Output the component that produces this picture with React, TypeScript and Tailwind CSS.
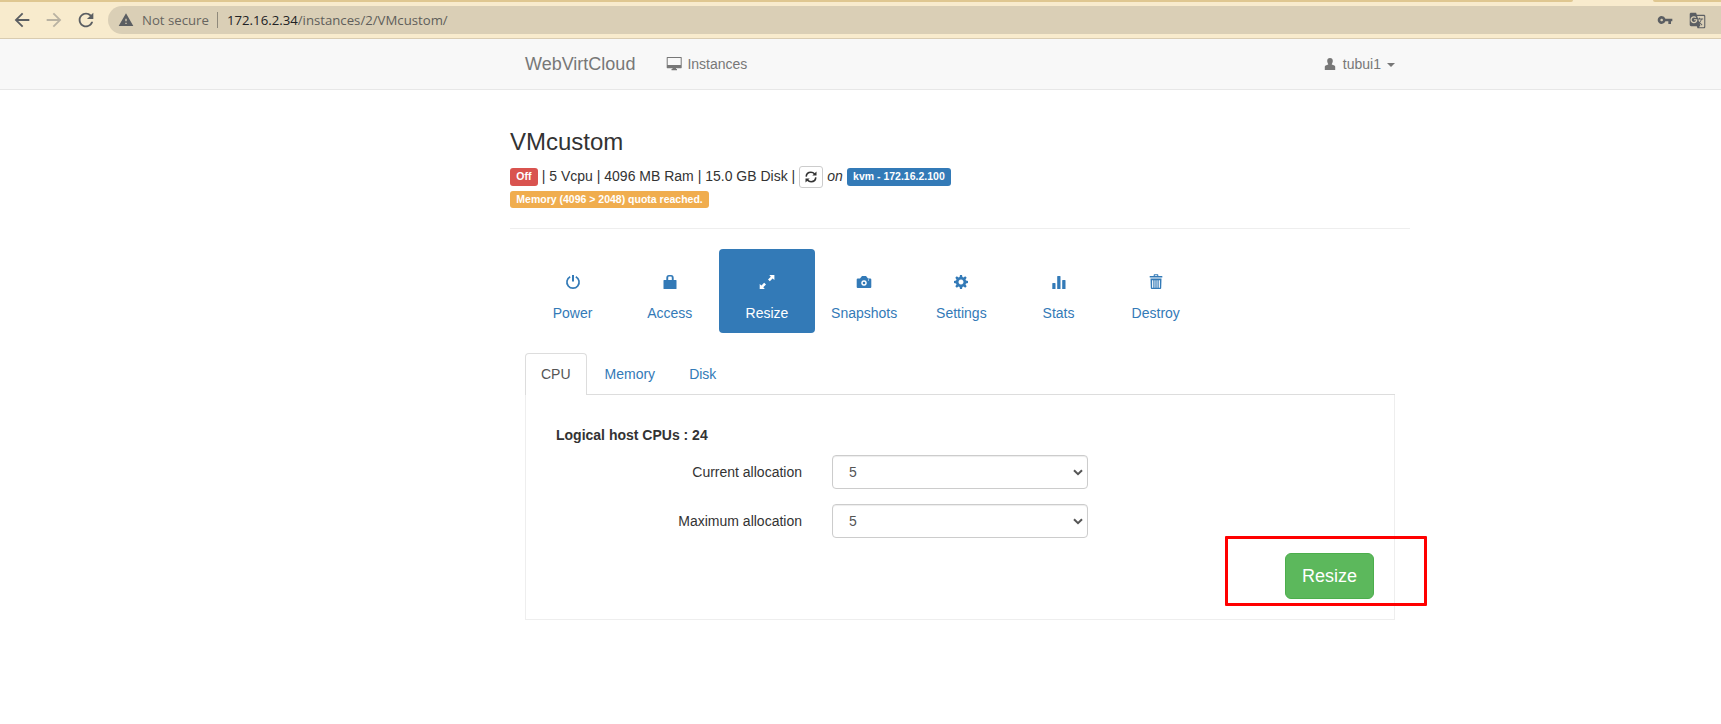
import type { ReactNode } from "react";
import { MdGTranslate, MdVpnKey } from "react-icons/md";

type GlyphProps = { children: ReactNode; className?: string; box?: string };

function Glyph({ children, className = "size-[14px]", box = "0 0 14 14" }: GlyphProps) {
  return (
    <svg viewBox={box} className={`${className} shrink-0 fill-current`} aria-hidden="true">
      {children}
    </svg>
  );
}

function BrowserBar() {
  return (
    <header className="flex h-[39px] flex-col border-b border-[#d9ccb1] bg-[#f8ebcd] text-[#5b5e62]">
      <div className="flex h-[2px] justify-between">
        <div className="w-[1573px] rounded-br-[3px] bg-[#dfc791]" />
        <div className="w-[68px] rounded-bl-[3px] bg-[#dfc791]" />
      </div>
      <div className="flex h-9 items-center pl-[11px]">
        <Glyph box="0 0 24 24" className="size-[22px]">
          <path d="M20 11H7.83l5.59-5.59L12 4l-8 8 8 8 1.41-1.41L7.83 13H20v-2z" />
        </Glyph>
        <Glyph box="0 0 24 24" className="ml-[10px] size-[22px] text-[#b9b2a2]">
          <path d="M12 4l-1.41 1.41L16.17 11H4v2h12.17l-5.58 5.59L12 20l8-8z" />
        </Glyph>
        <Glyph box="0 0 24 24" className="ml-[10px] size-[22px]">
          <path d="M17.65 6.35C16.2 4.9 14.21 4 12 4c-4.42 0-7.99 3.58-7.99 8s3.57 8 7.99 8c3.73 0 6.84-2.55 7.73-6h-2.08c-.82 2.33-3.04 4-5.65 4-3.31 0-6-2.69-6-6s2.69-6 6-6c1.66 0 3.14.69 4.22 1.78L13 11h7V4l-2.35 2.35z" />
        </Glyph>
        <div className="ml-[11px] flex h-7 flex-1 items-center rounded-l-full bg-[#dacfb6] pl-[10px] font-['Open_Sans',sans-serif] text-[13.2px] leading-7">
          <Glyph box="0 0 24 24" className="size-4">
            <path d="M1 21h22L12 2 1 21zm12-3h-2v-2h2v2zm0-4h-2v-4h2v4z" />
          </Glyph>
          <span className="ml-2 w-[67px] whitespace-nowrap text-[#67655f]">Not secure</span>
          <span className="ml-2 h-4 w-px bg-[#8f897b]" />
          <span className="ml-[9px] flex-1 whitespace-nowrap text-[#5f5e5a]">
            <span className="text-[#202124]">172.16.2.34</span>/instances/2/VMcustom/
          </span>
          <MdVpnKey className="size-4" />
          <MdGTranslate className="mr-[15px] ml-4 size-[17px]" />
        </div>
      </div>
    </header>
  );
}

function Navbar() {
  return (
    <nav className="h-[51px] border-b border-[#e7e7e7] bg-[#f8f8f8] pl-[525px] text-[#777]">
      <div className="flex h-[50px] w-[870px] items-center">
        <span className="text-[18px] leading-5">WebVirtCloud</span>
        <Glyph box="0 0 16 14" className="ml-[31px] h-[14px] w-4">
          <path fillRule="evenodd" d="M1.300 0H15.200Q15.700 0 15.700.5V10.500Q15.700 11.200 15.200 11.200H10V12H11V13.200H5.500V12H6.500V11.200H1.300Q.7 11.200.7 10.500V.5Q.7 0 1.300 0zM1.700 1V8H14.700V1z" />
        </Glyph>
        <span className="ml-[5px] flex-1 leading-5">Instances</span>
        <Glyph className="size-[14px]">
          <path d="M7 1C8.800 1 9.900 2.300 9.800 4 9.700 5.500 9.200 6.300 8.800 6.900V7.500L11.300 8.500Q12.200 9 12.200 9.800V13H1.800V9.800Q1.800 9 2.700 8.500L5.200 7.500V6.900C4.800 6.300 4.300 5.500 4.200 4 4.100 2.300 5.200 1 7 1z" />
        </Glyph>
        <span className="ml-[6px] leading-5">tubui1</span>
        <span className="mt-[2px] ml-[6px] border-x-4 border-t-4 border-x-transparent border-t-[#777]" />
      </div>
    </nav>
  );
}

function Badge({ children, className }: { children: ReactNode; className: string }) {
  return (
    <span className={`rounded-[3px] px-[6.3px] text-[10.5px] leading-[17px] font-bold whitespace-nowrap text-white ${className}`}>
      {children}
    </span>
  );
}

function Summary() {
  return (
    <section className="h-[139px] border-b border-[#eee] pt-[38px]">
      <h3 className="text-[24px] leading-[27px]">VMcustom</h3>
      <div className="mt-[11px] flex h-[22px] items-center whitespace-nowrap">
        <Badge className="h-[18px] bg-[#d9534f]">Off</Badge>
        <span className="mb-[3px] ml-[4px] leading-5">| 5 Vcpu | 4096 MB Ram | 15.0 GB Disk |</span>
        <button className="ml-[4px] flex h-[22px] w-6 items-center justify-center rounded-[3px] border border-[#ccc] bg-white">
          <svg viewBox="0 0 12 12" className="size-3 fill-none stroke-current stroke-[1.6]" aria-hidden="true">
            <path d="M1.200 5.600C1.400 3 3.400 1.300 5.900 1.300 7.500 1.300 8.600 1.900 9.700 3M10.800 6.400C10.600 9 8.600 10.700 6.100 10.700 4.500 10.700 3.400 10.100 2.300 9" />
            <path d="M11.500.4V4.600H7.300zM.5 11.600V7.400H4.700z" className="fill-current stroke-none" />
          </svg>
        </button>
        <em className="mb-[3px] ml-[4px] leading-5">on</em>
        <Badge className="ml-[4px] h-[18px] bg-[#337ab7]">kvm - 172.16.2.100</Badge>
      </div>
      <div className="mt-[3px] flex">
        <Badge className="h-[17px] bg-[#f0ad4e]">Memory (4096 &gt; 2048) quota reached.</Badge>
      </div>
    </section>
  );
}

const actions: { label: string; active?: boolean; icon: ReactNode }[] = [
  {
    label: "Power",
    icon: (
      <>
        <path d="M4.200 1.700A6.100 6.100 0 1 0 9.800 1.700" fill="none" stroke="currentColor" strokeWidth="1.700" />
        <path d="M6 0h2v6.500H6z" />
      </>
    ),
  },
  {
    label: "Access",
    icon: <path fillRule="evenodd" d="M3.300 5V3Q3.300 0 6 0H8q2.700 0 2.700 3V5H13q.5 0 .5.500V13.500q0 .5-.5.500H1Q.5 14 .5 13.500V5.500Q.5 5 1 5zM5.200 5H8.800V3Q8.800 1.600 8 1.600H6Q5.200 1.600 5.200 3z" />,
  },
  {
    label: "Resize",
    active: true,
    icon: <path d="M9.300 0H14.400V5.100L12.600 3.600 9.800 6.200 8 4.400 10.800 1.700zM-.3 8.900 1.400 10.400 4.200 7.800 6 9.600 3.300 12.300 4.800 14H-.3z" />,
  },
  {
    label: "Snapshots",
    icon: (
      <>
        <path fillRule="evenodd" d="M5 1H9L11 3.500H13.200Q14.300 3.500 14.300 4.600V12Q14.300 13 13.300 13H.7Q-.3 13-.3 12V4.600Q-.3 3.500.8 3.500H3zM7 5.200a2.800 2.800 0 1 0 .01 0zM11 4.600v1h1v-1z" />
        <circle cx="7" cy="8" r="1.300" />
      </>
    ),
  },
  {
    label: "Settings",
    icon: <path fillRule="evenodd" d="M6 0H8L8.400 2 9.500 2.500 11.200 1.300 12.700 2.800 11.500 4.500 12 5.600 14 6V8L12 8.400 11.500 9.500 12.700 11.200 11.200 12.700 9.500 11.500 8.400 12 8 14H6L5.600 12 4.500 11.500 2.800 12.700 1.300 11.200 2.500 9.500 2 8.400 0 8V6L2 5.600 2.500 4.500 1.300 2.800 2.800 1.300 4.500 2.500 5.600 2zM7 4.500a2.500 2.500 0 1 0 .01 0z" />,
  },
  {
    label: "Stats",
    icon: <path d="M.3 8.500q0-.5.500-.5H3q.5 0 .5.500V14H.3zM5.200 1.500q0-.5.500-.5H8q.5 0 .5.500V14H5.200zM10.200 5.500q0-.5.500-.5H13q.5 0 .5.500V14H10.200z" />,
  },
  {
    label: "Destroy",
    icon: <path fillRule="evenodd" d="M4.700 1V0Q4.700-.8 5.300-.8H8.700Q9.300-.8 9.300 0V1H13.300V2.400H.7V1zM5.800 1H8.200V.2H5.800zM1.500 3.400H12.500L12.200 13.200Q12.100 14 11.300 14H2.700Q1.900 14 1.800 13.200zM3.100 5.200V12.800H4.300V5.200zM5.500 5.200V12.800H6.400V5.200zM7.600 5.200V12.800H8.500V5.200zM9.700 5.200V12.800H10.900V5.200z" />,
  },
];

function ActionPills() {
  return (
    <ul className="mx-[15px] mt-5 flex gap-[2px]">
      {actions.map(({ label, active, icon }) => (
        <li
          key={label}
          className={`flex h-[84px] w-[95.2px] flex-col items-center rounded-[4px] pt-[26px] ${active ? "bg-[#337ab7] text-white" : "text-[#337ab7]"}`}
        >
          <svg viewBox="0 0 14 14" className="size-[14px] shrink-0 overflow-visible fill-current" aria-hidden="true">
            {icon}
          </svg>
          <span className="mt-[14px] leading-5">{label}</span>
        </li>
      ))}
    </ul>
  );
}

function AllocationRow({ label }: { label: string }) {
  return (
    <label className="flex h-[34px] items-center">
      <span className="w-[276px] text-right leading-5">{label}</span>
      <span className="ml-[30px] flex h-[34px] w-64 items-center justify-between rounded-[4px] border border-[#ccc] bg-white pr-[4px] pl-4 text-[#555] shadow-[inset_0_1px_1px_rgba(0,0,0,0.075)]">
        5
        <svg viewBox="0 0 10 7" className="h-[7px] w-[10px] fill-none stroke-current stroke-2" aria-hidden="true">
          <path d="M1 1.200 5 5.200 9 1.200" />
        </svg>
      </span>
    </label>
  );
}

function ResizePanel() {
  return (
    <section className="mx-[15px] mt-5">
      <div className="flex h-[42px] gap-[2px] border-b border-[#ddd] leading-5">
        <span className="h-[42px] rounded-t-[4px] border border-b-0 border-[#ddd] bg-white px-[15px] pt-[10px] text-[#555]">CPU</span>
        <span className="px-4 pt-[11px] text-[#337ab7]">Memory</span>
        <span className="px-4 pt-[11px] text-[#337ab7]">Disk</span>
      </div>
      <div className="relative h-[225px] border border-t-0 border-[#eee] pt-[30px]">
        <p className="pl-[30px] leading-5 font-bold">Logical host CPUs : 24</p>
        <div className="mt-[10px] flex flex-col gap-[15px]">
          <AllocationRow label="Current allocation" />
          <AllocationRow label="Maximum allocation" />
        </div>
        <div className="mt-[15px] flex justify-end pr-5">
          <button className="h-[46px] w-[89px] rounded-[6px] border border-[#4cae4c] bg-[#5cb85c] text-[18px] leading-6 text-white">Resize</button>
        </div>
        <div className="pointer-events-none absolute top-[141px] left-[699px] h-[70px] w-[202px] rounded-[1px] border-[3px] border-[#f00]" />
      </div>
    </section>
  );
}

export default function App() {
  return (
    <div className="h-[724px] overflow-hidden bg-white font-['Liberation_Sans',Arial,sans-serif] text-[14px] text-[#333]">
      <BrowserBar />
      <Navbar />
      <main className="ml-[510px] w-[900px]">
        <Summary />
        <ActionPills />
        <ResizePanel />
      </main>
    </div>
  );
}
